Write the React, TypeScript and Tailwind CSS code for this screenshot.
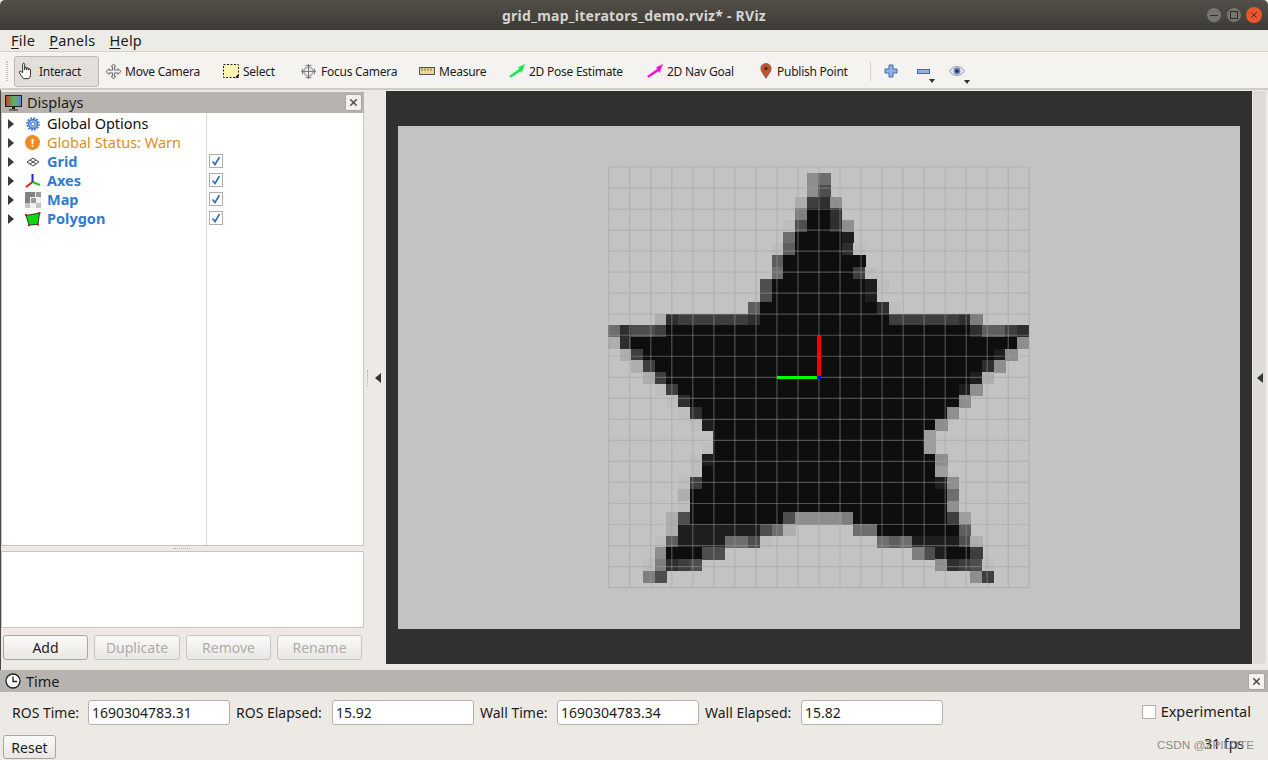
import React from 'react';
import { X } from 'lucide-react';

const font = { fontFamily: '"Noto Sans", "Open Sans", sans-serif' };

const z = (n: number) => '0'.repeat(n);
const gap = (n: number) => '.'.repeat(n);

// map cells, [first column, one grey digit per cell]
const starRows: [number, string][] = [
	[17, '86'],
	[17, '84'],
	[16, 'a328'],
	[16, '7002'],
	[15, 'b40028'],
	[15, '600001'],
	[14, 'b50000' + '2b'],
	[14, '5' + z(7)],
	[14, '6' + z(6) + '3b'],
	[13, '4' + z(8) + '1b'],
	[13, '4' + z(8) + '1'],
	[12, '5' + z(10) + '2b'],
	[4, 'a2333333' + '2' + z(11) + '333333' + '27'],
	[0, '62443' + z(26) + '25532'],
	[0, 'a2' + z(33) + '8'],
	[1, 'a3' + z(30) + '18'],
	[2, 'a3' + z(28) + '28'],
	[3, 'a3' + z(26) + '1a'],
	[4, 'b3' + z(24) + '18'],
	[5, 'b2' + z(23) + '8'],
	[6, 'b2' + z(21) + '8'],
	[7, 'b1' + z(19) + '8'],
	[9, z(18) + '9'],
	[8, 'b' + z(18) + '9'],
	[7, 'b1' + z(19) + '8'],
	[7, 'b' + z(20) + '9'],
	[6, 'b3' + z(20) + '18'],
	[6, 'a' + z(22) + '6'],
	[6, 'b' + z(22) + '8'],
	[5, 'a4' + z(8) + '488887' + z(8) + '39'],
	[5, 'a' + '1111111' + '46a' + gap(5) + '66' + z(7) + '5'],
	[4, 'b51111664b' + gap(9) + '6561111' + '4a'],
	[4, '8000' + '44' + gap(16) + '741003'],
	[3, 'b7234' + gap(20) + '8234b'],
	[3, '74' + gap(26) + '83'],
];

const CELL = 11.69;

function MapView() {
	return (
		<svg width="842" height="503" viewBox="398 126 842 503" className="block">
			<rect x="398" y="126" width="842" height="503" fill="#c3c3c3" />
			<g shapeRendering="crispEdges">
				{starRows.map(([col, cells], r) =>
					cells.split('').map((c, i) =>
						c === '.' ? null : (
							<rect
								key={`${r}-${i}`}
								x={608 + (col + i) * CELL}
								y={173.3 + r * CELL}
								width={CELL + 0.5}
								height={CELL + 0.5}
								fill={`#${c}e${c}e${c}e`}
							/>
						)
					)
				)}
			</g>
			<g stroke="#a0a0a0" strokeOpacity="0.45" strokeWidth="1.2">
				{Array.from({ length: 21 }, (_, i) => (
					<React.Fragment key={i}>
						<line x1={608.7 + i * 21.03} y1="167" x2={608.7 + i * 21.03} y2="587.6" />
						<line x1="608.7" y1={167 + i * 21.03} x2="1029.3" y2={167 + i * 21.03} />
					</React.Fragment>
				))}
			</g>
			<rect x="817" y="336" width="4" height="41" fill="#ff0000" />
			<rect x="777" y="376" width="42" height="3" fill="#00ff00" />
			<rect x="817" y="376" width="4" height="3" fill="#0000ff" />
		</svg>
	);
}

function PanelClose() {
	return (
		<div className="flex h-[17px] w-[17px] items-center justify-center rounded-[2px] border border-[#a9a5a0] bg-[#f4f2ef]">
			<X size={11} strokeWidth={3.5} className="text-[#55524e]" />
		</div>
	);
}

function ToolButton({ icon, label, className }: { icon: React.ReactNode; label: string; className: string }) {
	return (
		<div className={`flex h-[31px] flex-none items-center ${className}`}>
			{icon}
			<span className="mt-[1px] text-[12px] tracking-[-0.25px] text-[#1c1c1c]">{label}</span>
		</div>
	);
}

const HandIcon = () => (
	<svg width="17" height="20" viewBox="0 0 20 22" className="mr-[4px]" fill="#fff" stroke="#222" strokeWidth="1.1">
		<path d="M5.5 13V3.2c0-1.6 2.4-1.6 2.4 0V9.5V7.5c0-1.4 2.3-1.4 2.3 0v2-1c0-1.3 2.3-1.3 2.3 0v1.5-.6c0-1.3 2.2-1.3 2.2 0v6.1c0 2-1 3.5-2 4.5H6.5c-1-1.5-2-2.5-3-4l-1.900-3c-.7-1.300.9-2.300 1.900-1.300z" />
	</svg>
);

const MoveIcon = () => (
	<svg width="17" height="17" viewBox="0 0 18 18" className="mr-[3px]" fill="#eee" stroke="#555" strokeWidth="0.9">
		<path d="M9 1l2.500 3H10v3.500h3.500V6L17 9l-3.500 3v-1.500H10V14h1.500L9 17l-2.500-3H8v-3.500H4.500V12L1 9l3.500-3v1.500H8V4H6.500z" />
	</svg>
);

const SelectIcon = () => (
	<svg width="16" height="14" viewBox="0 0 16 14" className="mr-[4px]">
		<rect x="0.5" y="0.5" width="15" height="13" fill="#fdf5b0" stroke="#222" strokeDasharray="2 1.500" />
		<path d="M12 13.500h3.500V10z" fill="#111" />
	</svg>
);

const FocusIcon = () => (
	<svg width="17" height="17" viewBox="0 0 18 18" className="mr-[4px]" fill="none" stroke="#777" strokeWidth="1">
		<circle cx="9" cy="9" r="5" fill="#e6e6e6" />
		<path d="M9 1v16M1 9h16M6 2.500h6M6 15.500h6M2.500 6v6M15.500 6v6" />
	</svg>
);

const RulerIcon = () => (
	<svg width="16" height="8" viewBox="0 0 16 8" className="mr-[4px]">
		<rect x="0.5" y="0.5" width="15" height="7" fill="#e8d99a" stroke="#555" />
		<path d="M3 1v3M6 1v3M9 1v3M12 1v3" stroke="#8a7b45" />
	</svg>
);

const ArrowIcon = ({ color }: { color: string }) => (
	<svg width="16" height="14" viewBox="0 0 16 14" className="mr-[4px]">
		<path d="M15.500 0.500L9.500 3.500l1 1.500L0.500 12l1 1.500L11.500 7l1 1.500z" fill={color} stroke={color} strokeWidth="0.5" />
	</svg>
);

const PinIcon = () => (
	<svg width="12" height="16" viewBox="0 0 12 16" className="mr-[5px]">
		<path d="M6 0.500c3 0 5.200 2.200 5.200 5 0 3-3 6-5.200 10-2.200-4-5.200-7-5.200-10 0-2.800 2.200-5 5.200-5z" fill="#c0532f" stroke="#7a4a35" strokeWidth="0.6" />
		<circle cx="6" cy="5.500" r="1.700" fill="#4e2a18" />
	</svg>
);

const GearIcon = () => (
	<svg width="14" height="14" viewBox="0 0 14 14">
		<circle cx="7" cy="7" r="4.500" fill="#9db9e6" stroke="#3f74c8" strokeWidth="1.400" />
		<circle cx="7" cy="7" r="6" fill="none" stroke="#3f74c8" strokeWidth="1.600" strokeDasharray="1.800 1.300" />
		<circle cx="7" cy="7" r="2" fill="#fff" stroke="#3f74c8" />
	</svg>
);

const WarnIcon = () => (
	<div className="flex h-[15px] w-[15px] items-center justify-center rounded-full bg-[#f08a24] text-[11px] font-bold leading-none text-white">!</div>
);

const GridIcon = () => (
	<svg width="14" height="10" viewBox="0 0 14 10" fill="none" stroke="#333" strokeWidth="0.9">
		<path d="M7 1l6 4-6 4-6-4zM4 3l6 4M10 3L4 7" />
	</svg>
);

const AxesIcon = () => (
	<svg width="16" height="16" viewBox="0 0 16 16" fill="none" strokeWidth="2">
		<path d="M7.500 9L1 14" stroke="#e01b1b" />
		<path d="M7.500 9l7.500 3" stroke="#22c422" />
		<path d="M7.500 9V1" stroke="#2222dd" />
	</svg>
);

const MapIcon = () => (
	<svg width="16" height="16" viewBox="0 0 16 16" shapeRendering="crispEdges">
		<rect width="16" height="16" fill="#f0f0f0" />
		<path d="M0 0h10v5H5v6H0z" fill="#808080" />
		<path d="M11 0h5v5h-5zM6 6h5v5H6z" fill="#999" />
		<path d="M0 11h5v5H0zM11 11h5v5h-5z" fill="#c4c4c4" />
	</svg>
);

const PolygonIcon = () => (
	<svg width="16" height="14" viewBox="0 0 16 14">
		<path d="M1 3.500L14.500 1 13 12.500 4 13z" fill="#14d414" stroke="#111" strokeWidth="0.8" />
		<path d="M0 2h2v2H0zM13.500 0h2v2h-2zM12 11.500h2v2h-2zM3 12h2v2H3z" fill="#e01111" />
	</svg>
);

function TreeRow({ icon, label, labelClass, checked }: { icon: React.ReactNode; label: string; labelClass: string; checked?: boolean }) {
	return (
		<div className="flex h-[19px] items-center">
			<div className="ml-[6px] mt-[2px] h-0 w-0 flex-none border-y-[5px] border-l-[6px] border-y-transparent border-l-[#3a3a3a]" />
			<div className="ml-[10px] mt-[2px] flex w-[17px] flex-none justify-center">{icon}</div>
			<span className={`ml-[6px] w-[162px] flex-none pt-[2px] text-[14.5px] leading-none ${labelClass}`}>{label}</span>
			<div className="flex h-[14px] w-[14px] flex-none items-center justify-center">
				{checked && (
					<div className="flex h-[14px] w-[14px] items-center justify-center border border-[#b0aeaa] bg-white">
						<svg width="10" height="10" viewBox="0 0 10 10" fill="none" stroke="#2f6fb5" strokeWidth="1.600">
							<path d="M1.500 5.500L4 8.500 8.500 1" />
						</svg>
					</div>
				)}
			</div>
		</div>
	);
}

function QtButton({ label, disabled, className }: { label: string; disabled?: boolean; className: string }) {
	return (
		<div
			className={`flex items-center justify-center rounded-[3px] border bg-gradient-to-b from-[#fafafa] to-[#e9e7e4] text-[14px] ${
				disabled ? 'border-[#c9c6c1] text-[#aeaca8]' : 'border-[#a9a5a0] text-[#1c1c1c]'
			} ${className}`}
		>
			{label}
		</div>
	);
}

function TimeField({ label, value, labelWidth }: { label: string; value: string; labelWidth: string }) {
	return (
		<>
			<span className={`text-[14px] text-[#1c1c1c] ${labelWidth}`}>{label}</span>
			<div className="flex h-[25px] w-[142px] items-center rounded-[3px] border border-[#b5b1ac] bg-white pl-[3px] text-[14px] text-[#1c1c1c]">{value}</div>
		</>
	);
}

export default function App() {
	return (
		<div className="relative flex h-[760px] w-[1268px] flex-col overflow-hidden bg-[#edeae5]" style={font}>
			{/* title bar */}
			<div className="relative flex h-[30px] items-center justify-center rounded-t-[5px] bg-gradient-to-b from-[#524f48] to-[#3d3b36]">
				<span className="text-[14px] font-bold tracking-[0.25px] text-[#d6d4cf]">grid_map_iterators_demo.rviz* - RViz</span>
				<div className="absolute right-[6px] top-[7px] flex gap-[4px]">
					<div className="flex h-[16px] w-[16px] items-center justify-center rounded-full border border-[#4a4843] bg-[#77756f]">
						<div className="h-[1px] w-[8px] bg-[#2e2d2a]" />
					</div>
					<div className="flex h-[16px] w-[16px] items-center justify-center rounded-full border border-[#4a4843] bg-[#77756f]">
						<div className="h-[8px] w-[8px] border border-[#2e2d2a]" />
					</div>
					<div className="flex h-[16px] w-[16px] items-center justify-center rounded-full bg-[#e9582a]">
						<X size={10} strokeWidth={2} className="text-[#3a2015]" />
					</div>
				</div>
			</div>

			{/* menu bar */}
			<div className="flex h-[22px] items-center gap-[14px] border-b border-[#d5d2cc] bg-[#edebe6] pl-[11px] text-[14.5px] tracking-[0.25px] text-[#1c1c1c]">
				<span><span className="underline underline-offset-2">F</span>ile</span>
				<span><span className="underline underline-offset-2">P</span>anels</span>
				<span><span className="underline underline-offset-2">H</span>elp</span>
			</div>

			{/* tool bar */}
			<div className="flex h-[38px] items-center border-b-2 border-[#cfccc7] bg-[#f5f3ef] pl-[6px] pt-[2px]">
				<div className="mr-[6px] h-[20px] w-[2px] border-x border-dotted border-[#c8c5bf]" />
				<ToolButton icon={<HandIcon />} label="Interact" className="w-[85px] rounded-[3px] border border-[#bdbab5] bg-[#e2dfda] pl-[3px]" />
				<ToolButton icon={<MoveIcon />} label="Move Camera" className="ml-[6px] w-[118px]" />
				<ToolButton icon={<SelectIcon />} label="Select" className="w-[77px]" />
				<ToolButton icon={<FocusIcon />} label="Focus Camera" className="w-[119px]" />
				<ToolButton icon={<RulerIcon />} label="Measure" className="w-[90px]" />
				<ToolButton icon={<ArrowIcon color="#0ee84a" />} label="2D Pose Estimate" className="w-[138px]" />
				<ToolButton icon={<ArrowIcon color="#ee10d0" />} label="2D Nav Goal" className="w-[113px]" />
				<ToolButton icon={<PinIcon />} label="Publish Point" className="w-[105px]" />
				<div className="mx-[5px] h-[20px] w-[1px] bg-[#d5d2cc]" />
				<div className="ml-[8px] flex items-center">
					<svg width="14" height="14" viewBox="0 0 14 14">
						<path d="M5 1h4v4h4v4H9v4H5V9H1V5h4z" fill="#8fb2e0" stroke="#3c6cb0" />
					</svg>
					<div className="relative ml-[19px] flex w-[14px] items-center">
						<div className="h-[5px] w-[13px] border border-[#3c6cb0] bg-[#8fb2e0]" />
						<div className="absolute left-[12px] top-[10px] h-0 w-0 border-x-[3px] border-t-[4px] border-x-transparent border-t-[#333]" />
					</div>
					<div className="relative ml-[18px]">
						<svg width="16" height="12" viewBox="0 0 16 12">
							<path d="M0.500 6C4 0 12 0 15.500 6 12 12 4 12 0.500 6z" fill="#e3e6ee" stroke="#9a9fb0" />
							<circle cx="8" cy="6" r="3.400" fill="#6a7fb5" />
							<circle cx="8" cy="6" r="1.500" fill="#1d2b55" />
						</svg>
						<div className="absolute left-[15px] top-[15px] h-0 w-0 border-x-[3px] border-t-[4px] border-x-transparent border-t-[#333]" />
					</div>
				</div>
			</div>

			{/* main area */}
			<div className="flex h-[580px] border-l border-[#4a4843]">
				<div className="flex w-[363px] flex-none flex-col pt-[2px]">
					<div className="flex h-[21px] items-center justify-between bg-[#b7b3ae] pl-[4px] pr-[2px]">
						<div className="flex items-center gap-[5px]">
							<svg width="17" height="16" viewBox="0 0 17 16">
								<defs>
									<linearGradient id="monitor" x1="0" x2="1" y1="0" y2="0">
										<stop offset="0" stopColor="#c0392b" />
										<stop offset="0.5" stopColor="#5fb35f" />
										<stop offset="1" stopColor="#6c7fd0" />
									</linearGradient>
								</defs>
								<rect x="0.500" y="0.500" width="16" height="11" fill="url(#monitor)" stroke="#222" />
								<path d="M7 12h3v2H7zM4 14.500h9v1H4z" fill="#222" />
							</svg>
							<span className="text-[14.5px] text-[#1c1c1c]">Displays</span>
						</div>
						<PanelClose />
					</div>
					<div className="flex h-[433px] flex-col border-x border-b border-[#c9c6c1] bg-white">
						<div className="flex h-full">
							<div className="flex w-[204px] flex-none flex-col">
								<TreeRow icon={<GearIcon />} label="Global Options" labelClass="text-[#111]" />
								<TreeRow icon={<WarnIcon />} label="Global Status: Warn" labelClass="text-[#d98f1e]" />
								<TreeRow icon={<GridIcon />} label="Grid" labelClass="font-bold text-[#2f7ccf]" checked />
								<TreeRow icon={<AxesIcon />} label="Axes" labelClass="font-bold text-[#2f7ccf]" checked />
								<TreeRow icon={<MapIcon />} label="Map" labelClass="font-bold text-[#2f7ccf]" checked />
								<TreeRow icon={<PolygonIcon />} label="Polygon" labelClass="font-bold text-[#2f7ccf]" checked />
							</div>
							<div className="h-full w-[1px] flex-none bg-[#d8d6d2]" />
						</div>
					</div>
					<div className="flex h-[5px] items-center justify-center pr-[1px]">
						<div className="h-[1px] w-[16px] border-t border-dotted border-[#b5b1ac]" />
					</div>
					<div className="h-[77px] border border-[#c9c6c1] bg-white" />
					<div className="mt-[7px] flex gap-[6px] pl-[2px]">
						<QtButton label="Add" className="h-[25px] w-[85px]" />
						<QtButton label="Duplicate" disabled className="h-[25px] w-[86px]" />
						<QtButton label="Remove" disabled className="h-[25px] w-[85px]" />
						<QtButton label="Rename" disabled className="h-[25px] w-[85px]" />
					</div>
				</div>

				<div className="flex h-[574px] w-[22px] flex-none items-center pl-[3px] pt-[2px]">
					<div className="h-[16px] w-[1px] border-l border-dotted border-[#b5b1ac]" />
					<div className="ml-[7px] h-0 w-0 border-y-[5px] border-r-[6px] border-y-transparent border-r-[#333]" />
				</div>

				<div className="mt-[1px] h-[573px] w-[866px] flex-none bg-[#303030] px-[12px] pt-[35px]">
					<MapView />
				</div>

				<div className="ml-[1px] mt-[1px] flex h-[573px] w-[13px] flex-none items-center justify-center rounded-b-[3px] bg-[#dfdcd7]">
					<div className="h-0 w-0 border-y-[5px] border-r-[6px] border-y-transparent border-r-[#333]" />
				</div>
			</div>

			{/* time panel */}
			<div className="flex h-[22px] items-center justify-between bg-[#b7b3ae] pl-[5px] pr-[3px]">
				<div className="flex items-center gap-[5px]">
					<svg width="16" height="16" viewBox="0 0 16 16" fill="#fff" stroke="#222" strokeWidth="1.300">
						<circle cx="8" cy="8" r="7" />
						<path d="M8 3.500V8.500H12" fill="none" />
					</svg>
					<span className="pt-[2px] text-[14.5px] text-[#1c1c1c]">Time</span>
				</div>
				<PanelClose />
			</div>
			<div className="flex h-[39px] items-center pl-[12px] pt-[1px]">
				<TimeField label="ROS Time:" value="1690304783.31" labelWidth="w-[76px]" />
				<span className="w-[6px]" />
				<TimeField label="ROS Elapsed:" value="15.92" labelWidth="w-[96px]" />
				<span className="w-[6px]" />
				<TimeField label="Wall Time:" value="1690304783.34" labelWidth="w-[77px]" />
				<span className="w-[6px]" />
				<TimeField label="Wall Elapsed:" value="15.82" labelWidth="w-[96px]" />
				<div className="ml-auto mr-[17px] flex items-center">
					<div className="h-[14px] w-[14px] border border-[#b5b1ac] bg-white" />
					<span className="ml-[5px] text-[14.5px] text-[#1c1c1c]">Experimental</span>
				</div>
			</div>
			<div className="flex h-[29px] items-start justify-between pl-[3px] pt-[4px]">
				<QtButton label="Reset" className="h-[24px] w-[53px]" />
				<span className="mr-[24px] mt-[-2px] text-[14px] text-[#1c1c1c]">31 fps</span>
			</div>

			{/* watermark */}
			<span className="absolute bottom-[6px] right-[14px] text-[11.7px] text-[#8f8d8a]" style={{ fontFamily: '"Liberation Sans", sans-serif' }}>
				CSDN @ZPILOTE
			</span>
		</div>
	);
}
